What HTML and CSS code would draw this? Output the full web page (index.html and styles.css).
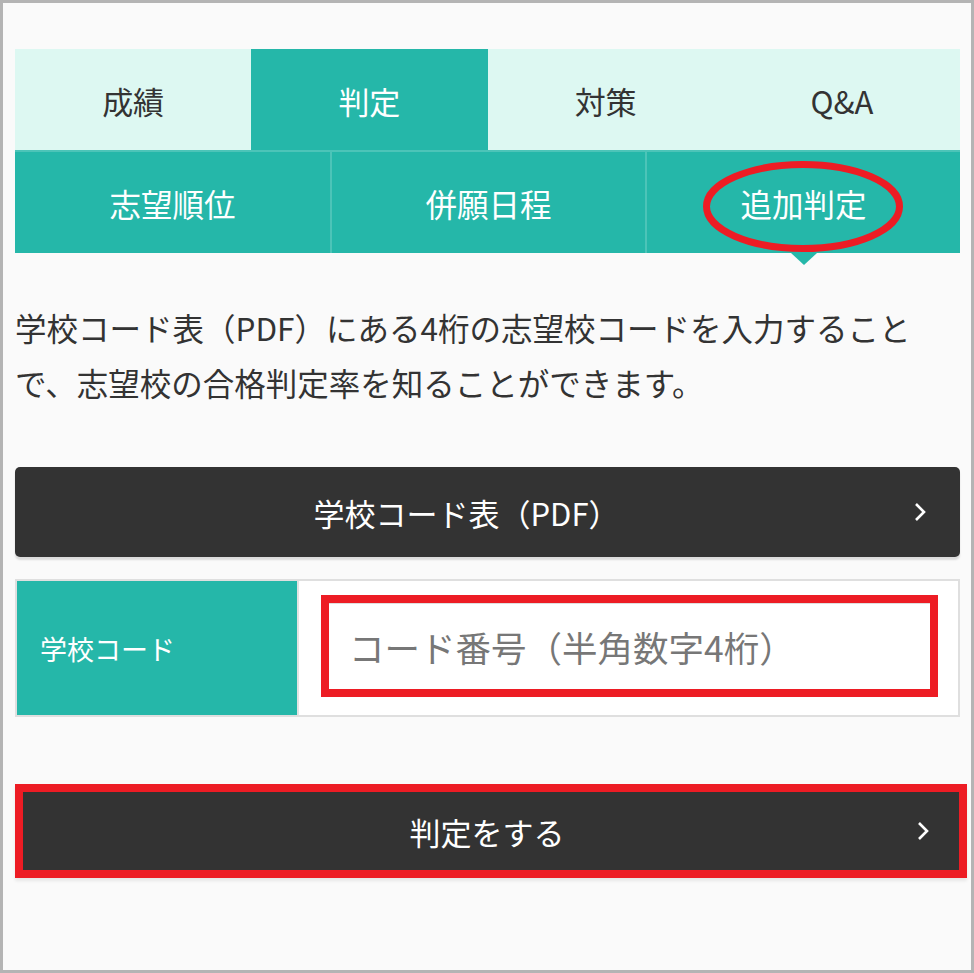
FILE: index.html
```html
<!DOCTYPE html>
<html lang="ja">
<head>
<meta charset="utf-8">
<title>判定</title>
<link rel="stylesheet" href="styles.css">
</head>
<body>
<div class="frame">
  <nav class="tabs-main">
    <div class="tab">成績</div>
    <div class="tab is-active">判定</div>
    <div class="tab">対策</div>
    <div class="tab">Q&amp;A</div>
  </nav>
  <nav class="tabs-sub">
    <div class="sub">志望順位</div>
    <div class="sub">併願日程</div>
    <div class="sub is-current">追加判定
      <svg class="mark-ellipse" width="204" height="95" viewBox="0 0 204 95"><ellipse cx="102" cy="47.5" rx="96.5" ry="42" fill="none" stroke="#ed1c24" stroke-width="7"/></svg>
    </div>
  </nav>
  <p class="lead">学校コード表（PDF）にある4桁の志望校コードを入力することで、志望校の合格判定率を知ることができます。</p>
  <a class="btn-dark btn-pdf">学校コード表（PDF）
    <svg class="chev" width="12" height="20" viewBox="0 0 12 20"><polyline points="2,2 10,10 2,18" fill="none" stroke="#fff" stroke-width="2.6" stroke-linejoin="miter"/></svg>
  </a>
  <div class="form-row">
    <div class="form-label">学校コード</div>
    <div class="form-field">
      <div class="input-mark"><div class="input-box">コード番号（半角数字4桁）</div></div>
    </div>
  </div>
  <div class="submit-mark">
    <a class="btn-submit">判定をする
      <svg class="chev" width="12" height="20" viewBox="0 0 12 20"><polyline points="2,2 10,10 2,18" fill="none" stroke="#fff" stroke-width="2.6"/></svg>
    </a>
  </div>
</div>
</body>
</html>
```
FILE: styles.css
```css
* { box-sizing: border-box; }
html, body { margin: 0; padding: 0; }
body {
  font-family: "Noto Sans CJK JP", "Noto Sans", sans-serif;
  color: #333;
  background: #fafafa;
}
.frame {
  width: 974px;
  height: 973px;
  border: 3px solid #b4b4b4;
  padding: 46px 11px 0 12px;
  background: #fafafa;
}
.tabs-main {
  display: grid;
  grid-template-columns: repeat(4, 1fr);
  height: 101px;
  background: #ddf8f2;
}
.tab {
  display: flex;
  align-items: center;
  justify-content: center;
  font-size: 31px;
  color: #333;
  padding-top: 2px;
}
.tab.is-active {
  background: #25b7a9;
  color: #fff;
}
.tabs-sub {
  display: grid;
  grid-template-columns: repeat(3, 1fr);
  height: 103px;
  background: #25b7a9;
  border-top: 2px solid #4cc4b8;
}
.sub {
  position: relative;
  display: flex;
  align-items: center;
  justify-content: center;
  color: #fff;
  font-size: 31.5px;
  font-weight: 400;
}
.sub + .sub { border-left: 2px solid #4cc4b8; }
.sub.is-current::after {
  content: "";
  position: absolute;
  left: 50%;
  bottom: -12px;
  margin-left: -13px;
  border-left: 13px solid transparent;
  border-right: 13px solid transparent;
  border-top: 12px solid #25b7a9;
}
.mark-ellipse {
  position: absolute;
  left: 54px;
  top: 7px;
}
.lead {
  margin: 47px 0 0;
  font-size: 31.5px;
  line-height: 55px;
  color: #333;
}
.btn-dark {
  position: relative;
  display: flex;
  align-items: center;
  justify-content: center;
  height: 90px;
  margin-top: 57px;
  padding-right: 42px;
  background: #333;
  color: #fff;
  border-radius: 5px;
  font-size: 31px;
  font-weight: 400;
  box-shadow: 0 3px 2px rgba(0,0,0,0.12);
}
.chev {
  position: absolute;
  right: 34px;
  top: 50%;
  margin-top: -10px;
}
.form-row {
  display: flex;
  margin-top: 22px;
  height: 138px;
  border: 2px solid #dfdfdf;
  background: #fff;
}
.form-label {
  width: 282px;
  display: flex;
  align-items: center;
  padding-left: 23px;
  background: #25b7a9;
  color: #fff;
  font-size: 27px;
  font-weight: 400;
  border-right: 2px solid #e3e3e3;
}
.form-field {
  flex: 1;
  padding: 14px 20px 18px 22px;
}
.input-mark {
  height: 102px;
  border: 8px solid #ed1c24;
}
.input-box {
  height: 100%;
  display: flex;
  align-items: center;
  padding-left: 20px;
  background: #fff;
  box-shadow: inset 0 1px 0 #dedede;
  color: #777;
  font-size: 35.5px;
}
.submit-mark {
  margin-top: 67px;
  margin-right: -7px;
  border: 8px solid #ed1c24;
  box-shadow: 0 3px 3px rgba(0,0,0,0.08);
}
.btn-submit {
  position: relative;
  display: flex;
  align-items: center;
  justify-content: center;
  height: 78px;
  padding-right: 8px;
  background: #333;
  color: #fff;
  font-size: 31px;
  font-weight: 400;
}
.btn-submit .chev { right: 30px; }
```
